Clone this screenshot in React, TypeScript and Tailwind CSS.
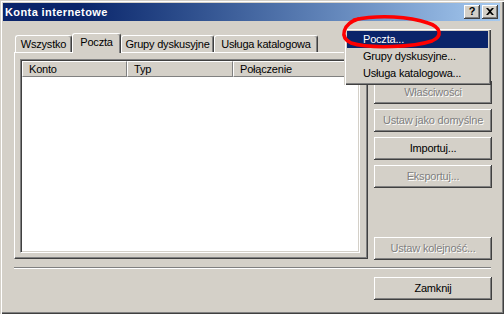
import React from "react"

const raised =
  "bg-[#d4d0c8] shadow-[inset_-1px_-1px_#404040,inset_1px_1px_#ffffff,inset_-2px_-2px_#808080,inset_2px_2px_#d4d0c8]"

function Button({ label, disabled }: { label: string; disabled?: boolean }) {
  return (
    <div
      className={`h-[23px] w-[118px] flex items-center justify-center ${raised} ${
        disabled ? "text-[#808080] [text-shadow:1px_1px_0_#ffffff]" : "text-black"
      }`}
    >
      {label}
    </div>
  )
}

function Tab({ label, width, active }: { label: string; width: string; active?: boolean }) {
  return (
    <div
      className={`${width} flex items-center justify-center rounded-t-[3px] border-t border-l border-white border-r border-r-[#404040] shadow-[inset_-1px_0_#808080] bg-[#d4d0c8] ${
        active ? "h-[20px] pb-[3px] relative z-10" : "h-[17px] mb-[1px] pt-[1px]"
      }`}
    >
      {label}
    </div>
  )
}

export default function App() {
  return (
    <div className="w-[504px] h-[314px] relative overflow-hidden bg-[#d4d0c8] text-[11px] leading-none tracking-[-0.2px] text-black font-['Liberation_Sans',Arial,sans-serif] pt-[3px] pl-[3px] pr-[4px] shadow-[inset_1px_1px_#d4d0c8,inset_2px_2px_#ffffff,inset_-1px_-1px_#404040,inset_-2px_-2px_#808080]">

      {/* Title bar */}
      <div className="h-[18px] flex items-center bg-linear-to-r from-[#0a246a] from-15% to-[#a6caf0] pl-[2px] pr-[2px]">
        <span className="font-bold text-white text-[11px] tracking-[0.4px]">Konta internetowe</span>
        <div className="ml-auto flex gap-[2px]">
          <div className={`w-[16px] h-[14px] flex items-center justify-center ${raised}`}>
            <span className="font-bold text-[11px] -mt-[1px]">?</span>
          </div>
          <div className={`w-[16px] h-[14px] flex items-center justify-center ${raised}`}>
            <svg width="8" height="7" viewBox="0 0 8 7" className="-mt-[1px]">
              <path d="M0 0h2l2 2 2-2h2L5 3.5 8 7H6L4 5 2 7H0l3-3.5z" fill="#000" />
            </svg>
          </div>
        </div>
      </div>

      {/* Main row */}
      <div className="flex items-start mt-[12px]">
        <div className="ml-[11px] w-[354px]">
          <div className="flex items-end h-[20px] -mb-[1px] pl-[1px]">
            <Tab label="Wszystko" width="w-[57px]" />
            <Tab label="Poczta" width="w-[49px]" active />
            <Tab label="Grupy dyskusyjne" width="w-[93px]" />
            <Tab label="Usługa katalogowa" width="w-[104px]" />
          </div>
          <div className="h-[207px] border-t border-l border-white border-r border-b border-r-[#404040] border-b-[#404040] shadow-[inset_-1px_-1px_#808080] pt-[6px] pl-[5px]">
            <div className="w-[340px] h-[194px] bg-white border border-t-[#808080] border-l-[#808080] border-r-white border-b-white shadow-[inset_1px_1px_#404040,inset_-1px_-1px_#d4d0c8] p-[1px]">
              <div className="flex h-[16px] bg-[#d4d0c8]">
                <div className="w-[105px] h-full flex items-center pl-[6px] border-t border-l border-white border-r border-b border-r-[#808080] border-b-[#808080]">
                  Konto
                </div>
                <div className="w-[106px] h-full flex items-center pl-[6px] border-t border-l border-white border-r border-b border-r-[#808080] border-b-[#808080]">
                  Typ
                </div>
                <div className="flex-1 h-full flex items-center pl-[6px] border-t border-l border-white border-r border-b border-r-[#808080] border-b-[#808080]">
                  Połączenie
                </div>
              </div>
            </div>
          </div>
        </div>

        <div className="ml-[6px] h-[227px] flex flex-col">
          <div className="h-[48px]" />
          <div className="flex flex-col gap-[5px]">
            <Button label="Właściwości" disabled />
            <Button label="Ustaw jako domyślne" disabled />
            <Button label="Importuj..." />
            <Button label="Eksportuj..." disabled />
          </div>
          <div className="mt-auto">
            <Button label="Ustaw kolejność..." disabled />
          </div>
        </div>
      </div>

      {/* Separator */}
      <div className="ml-[11px] w-[477px] mt-[7px] border-t border-t-[#808080] border-b border-b-white" />

      {/* Bottom */}
      <div className="flex mt-[8px] ml-[371px]">
        <Button label="Zamknij" />
      </div>

      {/* Dropdown menu from "Dodaj" */}
      <div className="absolute left-[344px] top-[28px] w-[147px] p-[3px] bg-[#d4d0c8] shadow-[inset_1px_1px_#d4d0c8,inset_2px_2px_#ffffff,inset_-1px_-1px_#404040,inset_-2px_-2px_#808080]">
        <div className="h-[17px] flex items-center pl-[16px] bg-[#0a246a] text-white">Poczta...</div>
        <div className="h-[17px] flex items-center pl-[16px]">Grupy dyskusyjne...</div>
        <div className="h-[17px] flex items-center pl-[16px]">Usługa katalogowa...</div>
      </div>

      {/* Red hand-drawn circle */}
      <svg className="absolute inset-0 pointer-events-none" width="504" height="314">
        <path
          d="M358 19 C 343 24, 339 37, 351 43 C 370 49, 414 47, 432 41 C 443 36, 441 27, 428 23 C 410 17, 380 14, 354 20"
          fill="none"
          stroke="#f00"
          strokeWidth="3.5"
          strokeLinecap="round"
        />
      </svg>
    </div>
  )
}
